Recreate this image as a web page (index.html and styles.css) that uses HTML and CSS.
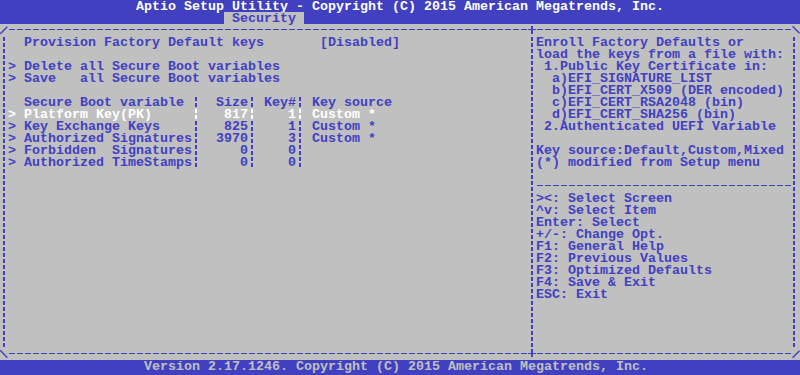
FILE: index.html
```html
<!DOCTYPE html>
<html>

<head>
    <link rel="stylesheet" href="styles.css">
</head>

<body>
    <header class="topbar">
        <div class="title">Aptio Setup Utility - Copyright (C) 2015 American Megatrends, Inc.</div>
        <nav class="tabs"><span class="tab">Security</span></nav>
    </header>

    <main class="frame">
        <div class="edge">
            <svg class="corner" viewBox="0 0 8 12"><path d="M0.3 9.7 L7.3 2.7" /></svg>
            <span class="dash run_left"></span>
            <svg class="joint" viewBox="0 0 8 12"><rect x="3" y="2" width="2" height="8" /><rect x="0" y="5" width="8" height="1" /></svg>
            <span class="dash run_right"></span>
            <svg class="corner" viewBox="0 0 8 12"><path d="M0.5 2.3 L7.5 9.3" /></svg>
        </div>

        <div class="panes">
            <section class="pane main_pane">
                <div class="line">  Provision Factory Default keys       [Disabled]</div>
                <div class="line"></div>
                <div class="line">&gt; Delete all Secure Boot variables</div>
                <div class="line">&gt; Save   all Secure Boot variables</div>
                <div class="line"></div>
                <div class="line">  Secure Boot variable <span class="sep"></span>  Size<span class="sep"></span> Key#<span class="sep"></span> Key source</div>
                <div class="line selected">&gt; Platform Key(PK)     <span class="sep"></span>   817<span class="sep"></span>    1<span class="sep"></span> Custom *</div>
                <div class="line">&gt; Key Exchange Keys    <span class="sep"></span>   825<span class="sep"></span>    1<span class="sep"></span> Custom *</div>
                <div class="line">&gt; Authorized Signatures<span class="sep"></span>  3970<span class="sep"></span>    3<span class="sep"></span> Custom *</div>
                <div class="line">&gt; Forbidden  Signatures<span class="sep"></span>     0<span class="sep"></span>    0<span class="sep"></span></div>
                <div class="line">&gt; Authorized TimeStamps<span class="sep"></span>     0<span class="sep"></span>    0<span class="sep"></span></div>
            </section>

            <aside class="pane help_pane">
                <div class="line">Enroll Factory Defaults or</div>
                <div class="line">load the keys from a file with:</div>
                <div class="line"> 1.Public Key Certificate in:</div>
                <div class="line">  a)EFI_SIGNATURE_LIST</div>
                <div class="line">  b)EFI_CERT_X509 (DER encoded)</div>
                <div class="line">  c)EFI_CERT_RSA2048 (bin)</div>
                <div class="line">  d)EFI_CERT_SHA256 (bin)</div>
                <div class="line"> 2.Authenticated UEFI Variable</div>
                <div class="line"></div>
                <div class="line">Key source:Default,Custom,Mixed</div>
                <div class="line">(*) modified from Setup menu</div>
                <div class="line"></div>
                <div class="rule"></div>
                <div class="line">&gt;&lt;: Select Screen</div>
                <div class="line">^v: Select Item</div>
                <div class="line">Enter: Select</div>
                <div class="line">+/-: Change Opt.</div>
                <div class="line">F1: General Help</div>
                <div class="line">F2: Previous Values</div>
                <div class="line">F3: Optimized Defaults</div>
                <div class="line">F4: Save &amp; Exit</div>
                <div class="line">ESC: Exit</div>
            </aside>
        </div>

        <div class="edge">
            <svg class="corner" viewBox="0 0 8 12"><path d="M0.3 2.3 L7.3 9.7" /></svg>
            <span class="dash run_left"></span>
            <svg class="joint" viewBox="0 0 8 12"><rect x="3" y="1" width="2" height="8" /><rect x="0" y="5" width="8" height="1" /></svg>
            <span class="dash run_right"></span>
            <svg class="corner" viewBox="0 0 8 12"><path d="M0.5 9.7 L7.5 2.7" /></svg>
        </div>
    </main>

    <footer class="statusbar">Version 2.17.1246. Copyright (C) 2015 American Megatrends, Inc.</footer>
</body>

</html>
```

FILE: styles.css
```css
* {
    box-sizing: border-box;
    margin: 0;
    padding: 0;
}

body {
    width: 800px;
    height: 375px;
    overflow: hidden;
    background: #c0c0c0;
    color: #4040c0;
    font-family: "Liberation Mono", "DejaVu Sans Mono", monospace;
    font-weight: bold;
    font-size: 13.333px;
    line-height: 12px;
}

.topbar {
    height: 24px;
    background: #4040c0;
}

.title {
    height: 12px;
    padding-top: 1px;
    padding-left: 136px;
    color: #ffffff;
    white-space: pre;
}

.tabs {
    display: flex;
    height: 12px;
    padding-left: 224px;
}

.tab {
    height: 12px;
    padding: 1px 8px 0;
    background: #c0c0c0;
    color: #4040c0;
}

.frame {
    display: flex;
    flex-direction: column;
    height: 336px;
}

.edge {
    display: flex;
    height: 12px;
}

.corner,
.joint {
    display: block;
    flex: none;
    width: 8px;
    height: 12px;
}

.corner path {
    stroke: currentColor;
    stroke-width: 1.4;
    fill: none;
}

.joint rect {
    fill: currentColor;
}

.dash {
    flex: none;
    height: 12px;
    background: repeating-linear-gradient(90deg, transparent 0 1px, currentColor 1px 7px, transparent 7px 8px) 0 5px / 100% 1px no-repeat;
}

.run_left {
    width: 520px;
}

.run_right {
    width: 256px;
}

.panes {
    display: grid;
    grid-template-columns: 528px 272px;
    height: 312px;
}

.pane {
    padding-left: 8px;
    background: repeating-linear-gradient(transparent 0 1px, #4040c0 1px 5px, transparent 5px 6px) 3px 0 / 2px 100% no-repeat;
}

.help_pane {
    background:
        repeating-linear-gradient(transparent 0 1px, #4040c0 1px 5px, transparent 5px 6px) 3px 0 / 2px 100% no-repeat,
        repeating-linear-gradient(transparent 0 1px, #4040c0 1px 5px, transparent 5px 6px) 265px 0 / 2px 100% no-repeat;
}

.line {
    height: 12px;
    padding-top: 1px;
    white-space: pre;
}

.rule {
    height: 12px;
    margin-right: 8px;
    background: repeating-linear-gradient(90deg, transparent 0 1px, #4040c0 1px 7px, transparent 7px 8px) 0 5px / 100% 1px no-repeat;
}

.sep {
    display: inline-block;
    width: 8px;
    height: 12px;
    margin-top: -1px;
    vertical-align: top;
    background: repeating-linear-gradient(transparent 0 1px, currentColor 1px 5px, transparent 5px 6px) 3px 0 / 2px 100% no-repeat;
}

.selected {
    color: #ffffff;
}

.statusbar {
    height: 15px;
    padding-top: 1px;
    padding-left: 144px;
    background: #4040c0;
    color: #c0c0c0;
    white-space: pre;
}
```
